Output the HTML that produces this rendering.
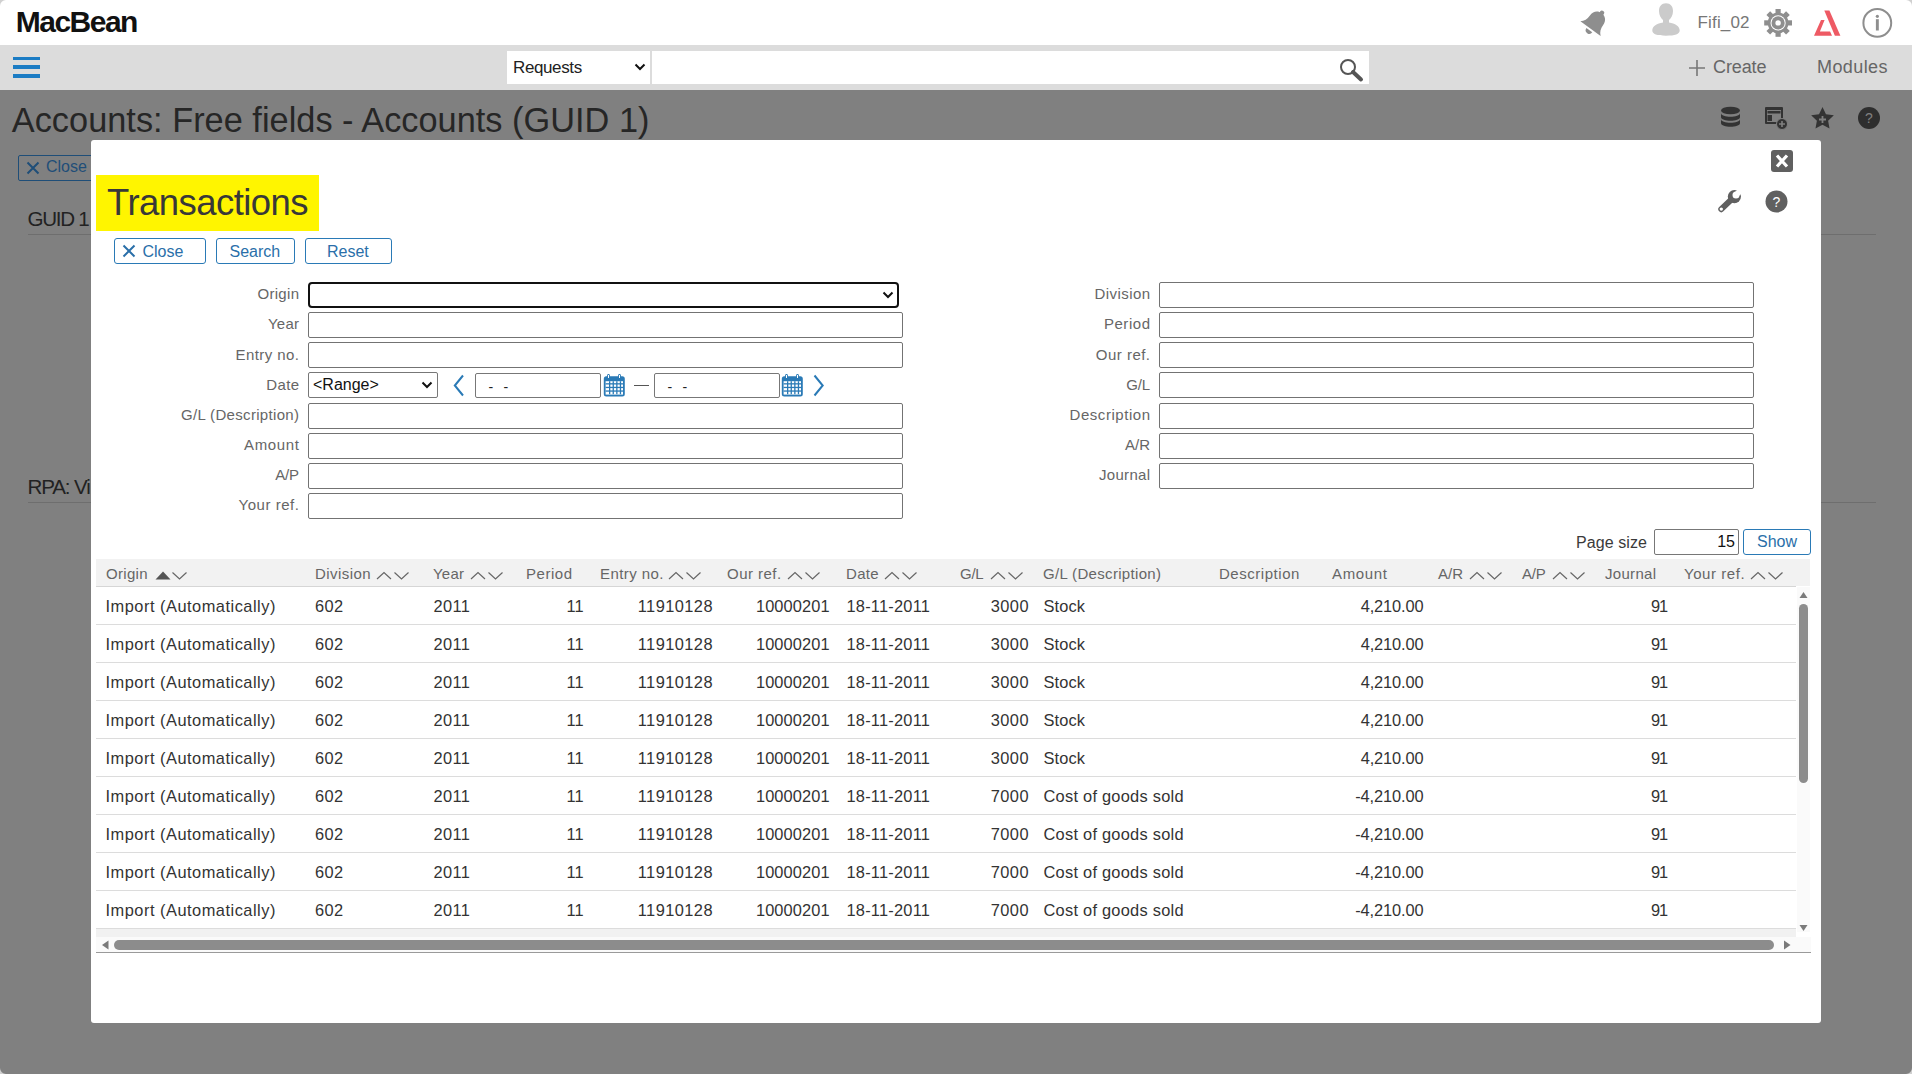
<!DOCTYPE html>
<html><head><meta charset="utf-8"><title>Transactions</title>
<style>
html,body{margin:0;padding:0}
body{width:1912px;height:1074px;overflow:hidden;position:relative;background:#808080;font-family:"Liberation Sans",sans-serif}
.t{position:absolute;white-space:nowrap}
.r{position:absolute;display:block}
</style></head><body>
<div class="r" style="left:0px;top:0px;width:1912px;height:45px;background:#fff"></div>
<div class="t" style="left:15.8px;top:7.31px;font-size:30px;line-height:30px;color:#111;font-weight:700;letter-spacing:-1.5170000000000001px;font-family:'Liberation Sans',sans-serif;">MacBean</div>
<svg class="r" style="left:1570px;top:0px" width="45" height="45" viewBox="0 0 45 45"><g transform="translate(20.5 28.6) rotate(36)" fill="#8e8e8e"><path d="M-12.5 0 L12.5 0 C9.5 -2.5 8.2 -6 8.2 -10 C8.2 -16 4.5 -19 0 -19 C-4.5 -19 -8.2 -16 -8.2 -10 C-8.2 -6 -9.5 -2.5 -12.5 0Z"/><circle cx="0" cy="-19.5" r="2.3"/><path d="M-3.6 2 A3.6 3.6 0 0 0 3.6 2Z"/></g></svg>
<svg class="r" style="left:1650px;top:0px" width="32" height="40" viewBox="0 0 32 40"><g fill="#cbcbcb"><path d="M16 3.3 C11.5 3.3 9 6.5 9 11 C9 15 11 18.5 13 20 L13 22.5 C7 23.5 2.3 26 2.3 30.5 C2.3 34 7 35.7 16 35.7 C25 35.7 29.7 34 29.7 30.5 C29.7 26 25 23.5 19 22.5 L19 20 C21 18.5 23 15 23 11 C23 6.5 20.5 3.3 16 3.3Z"/></g></svg>
<div class="t" style="left:1697.5px;top:14.11px;font-size:17px;line-height:17px;color:#777;font-weight:400;letter-spacing:0.167px;font-family:'Liberation Sans',sans-serif;">Fifi_02</div>
<svg class="r" style="left:1758px;top:2px" width="40" height="42" viewBox="0 0 40 42"><g fill="#8e8e8e" transform="translate(20.1 20.9)"><rect x="-2.6" y="-13.9" width="5.2" height="6" transform="rotate(0)"/><rect x="-2.6" y="-13.9" width="5.2" height="6" transform="rotate(45)"/><rect x="-2.6" y="-13.9" width="5.2" height="6" transform="rotate(90)"/><rect x="-2.6" y="-13.9" width="5.2" height="6" transform="rotate(135)"/><rect x="-2.6" y="-13.9" width="5.2" height="6" transform="rotate(180)"/><rect x="-2.6" y="-13.9" width="5.2" height="6" transform="rotate(225)"/><rect x="-2.6" y="-13.9" width="5.2" height="6" transform="rotate(270)"/><rect x="-2.6" y="-13.9" width="5.2" height="6" transform="rotate(315)"/><circle r="10.4"/></g><circle cx="20.1" cy="20.9" r="7.6" fill="#fff"/><circle cx="20.1" cy="20.9" r="6.6" fill="#8e8e8e"/><circle cx="20.1" cy="20.9" r="2.7" fill="#fff"/></svg>
<svg class="r" style="left:1810px;top:8px" width="34" height="30" viewBox="0 0 34 30"><g fill="#ee5a64" transform="translate(-1810 -8)"><path d="M1824.3 10.4 L1829.4 10.4 L1840.4 35.8 L1834.9 35.8Z"/><path d="M1814 35.8 L1821 20 L1824.6 20 L1819.9 31.6 L1830.1 31.6 L1832 35.8Z"/></g></svg>
<svg class="r" style="left:1858px;top:3px" width="40" height="40" viewBox="0 0 40 40"><g transform="translate(-1858 -3)"><circle cx="1877.3" cy="22.9" r="13.9" fill="none" stroke="#8e8e8e" stroke-width="2"/><rect x="1875.9" y="19.2" width="2.9" height="11.3" fill="#8e8e8e"/><circle cx="1877.35" cy="16.3" r="1.6" fill="#8e8e8e"/></g></svg>
<div class="r" style="left:0px;top:45px;width:1912px;height:45px;background:#dcdcdc"></div>
<div class="r" style="left:13px;top:57px;width:27px;height:3px;background:#1b7cc4"></div>
<div class="r" style="left:13px;top:65px;width:27px;height:4px;background:#1b7cc4"></div>
<div class="r" style="left:13px;top:74px;width:27px;height:4px;background:#1b7cc4"></div>
<div class="r" style="left:507px;top:51px;width:143px;height:33px;background:#fff"></div>
<div class="t" style="left:513px;top:58.61px;font-size:17px;line-height:17px;color:#222;font-weight:400;letter-spacing:-0.38px;font-family:'Liberation Sans',sans-serif;">Requests</div>
<svg class="r" style="left:633px;top:61px" width="14" height="12" viewBox="0 0 14 12"><path d="M2.5 3.5 L7 8 L11.5 3.5" fill="none" stroke="#111" stroke-width="2"/></svg>
<div class="r" style="left:652px;top:51px;width:717px;height:33px;background:#fff"></div>
<svg class="r" style="left:1337px;top:56px" width="28" height="28" viewBox="0 0 28 28"><circle cx="11" cy="11" r="7" fill="none" stroke="#555" stroke-width="2"/><path d="M16 16 L24 23.5" stroke="#555" stroke-width="4" stroke-linecap="round"/><path d="M15 15 L17 17" stroke="#555" stroke-width="2"/></svg>
<svg class="r" style="left:1688px;top:59px" width="18" height="18" viewBox="0 0 18 18"><path d="M9 1 V17 M1 9 H17" stroke="#777" stroke-width="1.6"/></svg>
<div class="t" style="left:1713px;top:57.76px;font-size:18px;line-height:18px;color:#666;font-weight:400;letter-spacing:-0.1px;font-family:'Liberation Sans',sans-serif;">Create</div>
<div class="t" style="left:1817px;top:57.76px;font-size:18px;line-height:18px;color:#666;font-weight:400;letter-spacing:0.417px;font-family:'Liberation Sans',sans-serif;">Modules</div>
<div class="r" style="left:0px;top:90px;width:1912px;height:984px;background:#808080"></div>
<div class="t" style="left:11.8px;top:102.97px;font-size:34.3px;line-height:34.3px;color:#262626;font-weight:400;letter-spacing:0.025px;font-family:'Liberation Sans',sans-serif;">Accounts: Free fields - Accounts (GUID 1)</div>
<svg class="r" style="left:1720px;top:106px" width="22" height="24" viewBox="0 0 22 24"><g fill="#333"><ellipse cx="10.5" cy="4.5" rx="9.5" ry="3.8"/><path d="M1 7 C1 12 20 12 20 7 V11 C20 16 1 16 1 11Z"/><path d="M1 13 C1 18 20 18 20 13 V17 C20 22 1 22 1 17Z"/></g></svg>
<svg class="r" style="left:1764px;top:106px" width="26" height="25" viewBox="0 0 26 25"><g fill="#333"><rect x="1" y="1" width="18" height="17" rx="1"/></g><rect x="3" y="4" width="14" height="12" fill="#808080"/><rect x="3.5" y="5" width="13" height="2.5" fill="#333"/><rect x="3.5" y="9" width="4.5" height="6" fill="#333"/><circle cx="18" cy="18" r="5.5" fill="#333" stroke="#808080" stroke-width="1"/><path d="M18 15 V21 M15 18 H21" stroke="#808080" stroke-width="1.6"/></svg>
<svg class="r" style="left:1811px;top:106px" width="24" height="24" viewBox="0 0 24 24"><path d="M11.50 1.00 L14.97 8.17 L22.86 9.25 L17.11 14.76 L18.52 22.60 L11.50 18.84 L4.48 22.60 L5.89 14.76 L0.14 9.25 L8.03 8.17Z" fill="#333"/><path d="M11.5 10 V17 M8 13.5 H15" stroke="#808080" stroke-width="1.8"/></svg>
<svg class="r" style="left:1857px;top:106px" width="24" height="24" viewBox="0 0 24 24"><circle cx="12" cy="12" r="11" fill="#2e2e2e"/><text x="12" y="17" text-anchor="middle" font-family="Liberation Sans" font-size="14" fill="#808080">?</text></svg>
<div class="r" style="left:18px;top:155px;width:100px;height:26px;border:1px solid #1f4e78;border-radius:2px;box-sizing:border-box"></div>
<svg class="r" style="left:26px;top:161px" width="14" height="14" viewBox="0 0 14 14"><path d="M1.5 1.5 L12.5 12.5 M12.5 1.5 L1.5 12.5" stroke="#1f4e78" stroke-width="2"/></svg>
<div class="t" style="left:46px;top:159.46px;font-size:16px;line-height:16px;color:#1f4e78;font-weight:400;font-family:'Liberation Sans',sans-serif;">Close</div>
<div class="t" style="left:27.5px;top:209.46px;font-size:20.6px;line-height:20.6px;color:#222;font-weight:400;letter-spacing:-1.3px;font-family:'Liberation Sans',sans-serif;">GUID 1</div>
<div class="r" style="left:28px;top:234px;width:1848px;height:1px;background:#6e6e6e"></div>
<div class="t" style="left:27.5px;top:476.56px;font-size:20.6px;line-height:20.6px;color:#222;font-weight:400;letter-spacing:-1.15px;font-family:'Liberation Sans',sans-serif;">RPA: Vi</div>
<div class="r" style="left:28px;top:502px;width:1848px;height:1px;background:#6e6e6e"></div>
<div class="r" style="left:91px;top:140px;width:1730px;height:883px;background:#fff;border-radius:3px"></div>
<div class="r" style="left:1771px;top:150px;width:22px;height:22px;background:#606060;border-radius:3px"></div>
<svg class="r" style="left:1771px;top:150px" width="22" height="22" viewBox="0 0 22 22"><path d="M6 5.5 L16 16.5 M16 5.5 L6 16.5" stroke="#fff" stroke-width="3.2"/></svg>
<svg class="r" style="left:1716px;top:187px" width="28" height="28" viewBox="0 0 28 28"><circle cx="18.4" cy="9.6" r="6.6" fill="#606060"/><path d="M18.4 9.6 L5.3 22.2" stroke="#606060" stroke-width="6" stroke-linecap="round"/><circle cx="20" cy="8" r="3.5" fill="#fff"/><path d="M20 8 L27 1" stroke="#fff" stroke-width="5.5"/><circle cx="5.3" cy="22.1" r="1.7" fill="#fff"/></svg>
<svg class="r" style="left:1765px;top:190px" width="23" height="23" viewBox="0 0 23 23"><circle cx="11.5" cy="11.5" r="11" fill="#606060"/><text x="11.5" y="16.6" text-anchor="middle" font-family="Liberation Sans" font-size="14" fill="#fff">?</text></svg>
<div class="r" style="left:96px;top:175px;width:223px;height:56px;background:#fff500"></div>
<div class="t" style="left:107px;top:185.30px;font-size:36.5px;line-height:36.5px;color:#383838;font-weight:400;letter-spacing:-0.55px;font-family:'Liberation Sans',sans-serif;">Transactions</div>
<div class="r" style="left:114px;top:238px;width:92px;height:26px;border:1px solid #2a7ab6;border-radius:3px;box-sizing:border-box;background:#fff"></div>
<div class="t" style="left:142.5px;top:244.46px;font-size:16px;line-height:16px;color:#2a6fa9;font-weight:400;font-family:'Liberation Sans',sans-serif;">Close</div>
<svg class="r" style="left:122px;top:244px" width="14" height="14" viewBox="0 0 14 14"><path d="M1.5 1.5 L12.5 12.5 M12.5 1.5 L1.5 12.5" stroke="#2a6fa9" stroke-width="2"/></svg>
<div class="r" style="left:216px;top:238px;width:79px;height:26px;border:1px solid #2a7ab6;border-radius:3px;box-sizing:border-box;background:#fff"></div>
<div class="t" style="left:229.5px;top:244.46px;font-size:16px;line-height:16px;color:#2a6fa9;font-weight:400;font-family:'Liberation Sans',sans-serif;">Search</div>
<div class="r" style="left:305px;top:238px;width:87px;height:26px;border:1px solid #2a7ab6;border-radius:3px;box-sizing:border-box;background:#fff"></div>
<div class="t" style="left:327px;top:244.46px;font-size:16px;line-height:16px;color:#2a6fa9;font-weight:400;font-family:'Liberation Sans',sans-serif;">Reset</div>
<div class="t" style="right:1612.68px;text-align:right;top:286.30px;font-size:15px;line-height:15px;color:#666;font-weight:400;letter-spacing:0.32px;font-family:'Liberation Sans',sans-serif;">Origin</div>
<div class="r" style="left:308px;top:282px;width:591px;height:26px;border:2px solid #111;border-radius:4px;box-sizing:border-box;background:#fff"></div>
<svg class="r" style="left:881px;top:289px" width="14" height="12" viewBox="0 0 14 12"><path d="M2.5 3.5 L7 8 L11.5 3.5" fill="none" stroke="#111" stroke-width="2"/></svg>
<div class="t" style="right:1612.77px;text-align:right;top:316.45px;font-size:15px;line-height:15px;color:#666;font-weight:400;letter-spacing:0.233px;font-family:'Liberation Sans',sans-serif;">Year</div>
<div class="r" style="left:308px;top:312px;width:595px;height:26px;border:1px solid #737373;border-radius:2px;box-sizing:border-box;background:#fff"></div>
<div class="t" style="right:1612.58px;text-align:right;top:346.60px;font-size:15px;line-height:15px;color:#666;font-weight:400;letter-spacing:0.425px;font-family:'Liberation Sans',sans-serif;">Entry no.</div>
<div class="r" style="left:308px;top:342px;width:595px;height:26px;border:1px solid #737373;border-radius:2px;box-sizing:border-box;background:#fff"></div>
<div class="t" style="right:1612.67px;text-align:right;top:376.75px;font-size:15px;line-height:15px;color:#666;font-weight:400;letter-spacing:0.333px;font-family:'Liberation Sans',sans-serif;">Date</div>
<div class="r" style="left:308px;top:372px;width:130px;height:26px;border:1px solid #777;border-radius:2px;box-sizing:border-box;background:#fff"></div>
<div class="t" style="left:313px;top:376.96px;font-size:16px;line-height:16px;color:#111;font-weight:400;font-family:'Liberation Sans',sans-serif;">&lt;Range&gt;</div>
<svg class="r" style="left:420px;top:379px" width="14" height="12" viewBox="0 0 14 12"><path d="M2.5 3.5 L7 8 L11.5 3.5" fill="none" stroke="#111" stroke-width="2"/></svg>
<svg class="r" style="left:451px;top:374px" width="16" height="23" viewBox="0 0 16 23"><path d="M12 1.5 L3.8 11.5 L12 21.5" fill="none" stroke="#2a7ab6" stroke-width="2"/></svg>
<div class="r" style="left:475px;top:373px;width:126px;height:25px;border:1px solid #777;border-radius:2px;box-sizing:border-box;background:#fff"></div>
<div class="t" style="left:488.5px;top:380.15px;font-size:14px;line-height:14px;color:#222;font-weight:400;font-family:'Liberation Sans',sans-serif;">-</div>
<div class="t" style="left:503.5px;top:380.15px;font-size:14px;line-height:14px;color:#222;font-weight:400;font-family:'Liberation Sans',sans-serif;">-</div>
<div class="r" style="left:654px;top:373px;width:126px;height:25px;border:1px solid #777;border-radius:2px;box-sizing:border-box;background:#fff"></div>
<div class="t" style="left:667.5px;top:380.15px;font-size:14px;line-height:14px;color:#222;font-weight:400;font-family:'Liberation Sans',sans-serif;">-</div>
<div class="t" style="left:682.5px;top:380.15px;font-size:14px;line-height:14px;color:#222;font-weight:400;font-family:'Liberation Sans',sans-serif;">-</div>
<div class="r" style="left:634px;top:385px;width:15px;height:1.2px;background:#555"></div>
<svg class="r" style="left:602.5px;top:374px" width="23" height="23" viewBox="0 0 23 23"><rect x="0.8" y="2.2" width="21" height="20.2" rx="2.5" fill="#2a7ab6"/><rect x="2.6" y="7.2" width="17.4" height="13.4" fill="#fff"/><rect x="4.2" y="0" width="2.6" height="5" rx="1.2" fill="#2a7ab6"/><rect x="15.2" y="0" width="2.6" height="5" rx="1.2" fill="#2a7ab6"/><rect x="5" y="1" width="1" height="3" fill="#fff"/><rect x="16" y="1" width="1" height="3" fill="#fff"/><g fill="#2a7ab6"><rect x="2.6" y="9.2" width="17.4" height="1.3"/><rect x="2.6" y="12.8" width="17.4" height="1.3"/><rect x="2.6" y="16.4" width="17.4" height="1.3"/><rect x="6" y="7.2" width="1.3" height="13"/><rect x="9.6" y="7.2" width="1.3" height="13"/><rect x="13.2" y="7.2" width="1.3" height="13"/><rect x="16.8" y="7.2" width="1.3" height="13"/></g></svg>
<svg class="r" style="left:781px;top:374px" width="23" height="23" viewBox="0 0 23 23"><rect x="0.8" y="2.2" width="21" height="20.2" rx="2.5" fill="#2a7ab6"/><rect x="2.6" y="7.2" width="17.4" height="13.4" fill="#fff"/><rect x="4.2" y="0" width="2.6" height="5" rx="1.2" fill="#2a7ab6"/><rect x="15.2" y="0" width="2.6" height="5" rx="1.2" fill="#2a7ab6"/><rect x="5" y="1" width="1" height="3" fill="#fff"/><rect x="16" y="1" width="1" height="3" fill="#fff"/><g fill="#2a7ab6"><rect x="2.6" y="9.2" width="17.4" height="1.3"/><rect x="2.6" y="12.8" width="17.4" height="1.3"/><rect x="2.6" y="16.4" width="17.4" height="1.3"/><rect x="6" y="7.2" width="1.3" height="13"/><rect x="9.6" y="7.2" width="1.3" height="13"/><rect x="13.2" y="7.2" width="1.3" height="13"/><rect x="16.8" y="7.2" width="1.3" height="13"/></g></svg>
<svg class="r" style="left:810px;top:374px" width="16" height="23" viewBox="0 0 16 23"><path d="M4.5 1.5 L12.7 11.5 L4.5 21.5" fill="none" stroke="#2a7ab6" stroke-width="2"/></svg>
<div class="t" style="right:1612.67px;text-align:right;top:406.90px;font-size:15px;line-height:15px;color:#666;font-weight:400;letter-spacing:0.325px;font-family:'Liberation Sans',sans-serif;">G/L (Description)</div>
<div class="r" style="left:308px;top:403px;width:595px;height:26px;border:1px solid #737373;border-radius:2px;box-sizing:border-box;background:#fff"></div>
<div class="t" style="right:1612.34px;text-align:right;top:437.05px;font-size:15px;line-height:15px;color:#666;font-weight:400;letter-spacing:0.66px;font-family:'Liberation Sans',sans-serif;">Amount</div>
<div class="r" style="left:308px;top:433px;width:595px;height:26px;border:1px solid #737373;border-radius:2px;box-sizing:border-box;background:#fff"></div>
<div class="t" style="right:1613.25px;text-align:right;top:467.20px;font-size:15px;line-height:15px;color:#666;font-weight:400;letter-spacing:-0.25px;font-family:'Liberation Sans',sans-serif;">A/P</div>
<div class="r" style="left:308px;top:463px;width:595px;height:26px;border:1px solid #737373;border-radius:2px;box-sizing:border-box;background:#fff"></div>
<div class="t" style="right:1612.45px;text-align:right;top:497.35px;font-size:15px;line-height:15px;color:#666;font-weight:400;letter-spacing:0.55px;font-family:'Liberation Sans',sans-serif;">Your ref.</div>
<div class="r" style="left:308px;top:493px;width:595px;height:26px;border:1px solid #737373;border-radius:2px;box-sizing:border-box;background:#fff"></div>
<div class="t" style="right:761.57px;text-align:right;top:286.30px;font-size:15px;line-height:15px;color:#666;font-weight:400;letter-spacing:0.429px;font-family:'Liberation Sans',sans-serif;">Division</div>
<div class="r" style="left:1159px;top:282px;width:595px;height:26px;border:1px solid #737373;border-radius:2px;box-sizing:border-box;background:#fff"></div>
<div class="t" style="right:761.46px;text-align:right;top:316.45px;font-size:15px;line-height:15px;color:#666;font-weight:400;letter-spacing:0.54px;font-family:'Liberation Sans',sans-serif;">Period</div>
<div class="r" style="left:1159px;top:312px;width:595px;height:26px;border:1px solid #737373;border-radius:2px;box-sizing:border-box;background:#fff"></div>
<div class="t" style="right:761.53px;text-align:right;top:346.60px;font-size:15px;line-height:15px;color:#666;font-weight:400;letter-spacing:0.471px;font-family:'Liberation Sans',sans-serif;">Our ref.</div>
<div class="r" style="left:1159px;top:342px;width:595px;height:26px;border:1px solid #737373;border-radius:2px;box-sizing:border-box;background:#fff"></div>
<div class="t" style="right:762.25px;text-align:right;top:376.75px;font-size:15px;line-height:15px;color:#666;font-weight:400;letter-spacing:-0.25px;font-family:'Liberation Sans',sans-serif;">G/L</div>
<div class="r" style="left:1159px;top:372px;width:595px;height:26px;border:1px solid #737373;border-radius:2px;box-sizing:border-box;background:#fff"></div>
<div class="t" style="right:761.46px;text-align:right;top:406.90px;font-size:15px;line-height:15px;color:#666;font-weight:400;letter-spacing:0.54px;font-family:'Liberation Sans',sans-serif;">Description</div>
<div class="r" style="left:1159px;top:403px;width:595px;height:26px;border:1px solid #737373;border-radius:2px;box-sizing:border-box;background:#fff"></div>
<div class="t" style="right:761.95px;text-align:right;top:437.05px;font-size:15px;line-height:15px;color:#666;font-weight:400;letter-spacing:0.05px;font-family:'Liberation Sans',sans-serif;">A/R</div>
<div class="r" style="left:1159px;top:433px;width:595px;height:26px;border:1px solid #737373;border-radius:2px;box-sizing:border-box;background:#fff"></div>
<div class="t" style="right:761.70px;text-align:right;top:467.20px;font-size:15px;line-height:15px;color:#666;font-weight:400;letter-spacing:0.3px;font-family:'Liberation Sans',sans-serif;">Journal</div>
<div class="r" style="left:1159px;top:463px;width:595px;height:26px;border:1px solid #737373;border-radius:2px;box-sizing:border-box;background:#fff"></div>
<div class="t" style="right:264.90px;text-align:right;top:535.46px;font-size:16px;line-height:16px;color:#3a3a3a;font-weight:400;letter-spacing:0.1px;font-family:'Liberation Sans',sans-serif;">Page size</div>
<div class="r" style="left:1654px;top:529px;width:85px;height:26px;border:1px solid #777;border-radius:2px;box-sizing:border-box;background:#fff"></div>
<div class="t" style="right:177.00px;text-align:right;top:534.46px;font-size:16px;line-height:16px;color:#111;font-weight:400;font-family:'Liberation Sans',sans-serif;">15</div>
<div class="r" style="left:1743px;top:529px;width:68px;height:26px;border:1px solid #2a7ab6;border-radius:3px;box-sizing:border-box;background:#fff"></div>
<div class="t" style="left:1757px;top:534.46px;font-size:16px;line-height:16px;color:#2a6fa9;font-weight:400;font-family:'Liberation Sans',sans-serif;">Show</div>
<div class="r" style="left:96px;top:559px;width:1714px;height:27px;background:#f2f2f2"></div>
<div class="r" style="left:96px;top:586px;width:1700px;height:1px;background:#d6d6d6"></div>
<div class="t" style="left:106px;top:566.30px;font-size:15px;line-height:15px;color:#666;font-weight:400;letter-spacing:0.32px;font-family:'Liberation Sans',sans-serif;">Origin</div>
<svg class="r" style="left:154.9px;top:570px" width="34" height="11" viewBox="0 0 34 11"><path d="M0.5 9.5 L8 1.5 L15.5 9.5Z" fill="#555"/><path d="M17.5 2.5 L24.5 9 L31.5 2.5" fill="none" stroke="#666" stroke-width="1.2"/></svg>
<div class="t" style="left:315px;top:566.30px;font-size:15px;line-height:15px;color:#666;font-weight:400;letter-spacing:0.429px;font-family:'Liberation Sans',sans-serif;">Division</div>
<svg class="r" style="left:375.5px;top:570px" width="34" height="11" viewBox="0 0 34 11"><path d="M1 9 L8 2.5 L15 9" fill="none" stroke="#666" stroke-width="1.2"/><path d="M18.5 2.5 L25.5 9 L32.5 2.5" fill="none" stroke="#666" stroke-width="1.2"/></svg>
<div class="t" style="left:433px;top:566.30px;font-size:15px;line-height:15px;color:#666;font-weight:400;letter-spacing:0.233px;font-family:'Liberation Sans',sans-serif;">Year</div>
<svg class="r" style="left:470.2px;top:570px" width="34" height="11" viewBox="0 0 34 11"><path d="M1 9 L8 2.5 L15 9" fill="none" stroke="#666" stroke-width="1.2"/><path d="M18.5 2.5 L25.5 9 L32.5 2.5" fill="none" stroke="#666" stroke-width="1.2"/></svg>
<div class="t" style="left:526px;top:566.30px;font-size:15px;line-height:15px;color:#666;font-weight:400;letter-spacing:0.54px;font-family:'Liberation Sans',sans-serif;">Period</div>
<div class="t" style="left:600px;top:566.30px;font-size:15px;line-height:15px;color:#666;font-weight:400;letter-spacing:0.425px;font-family:'Liberation Sans',sans-serif;">Entry no.</div>
<svg class="r" style="left:667.9px;top:570px" width="34" height="11" viewBox="0 0 34 11"><path d="M1 9 L8 2.5 L15 9" fill="none" stroke="#666" stroke-width="1.2"/><path d="M18.5 2.5 L25.5 9 L32.5 2.5" fill="none" stroke="#666" stroke-width="1.2"/></svg>
<div class="t" style="left:727px;top:566.30px;font-size:15px;line-height:15px;color:#666;font-weight:400;letter-spacing:0.471px;font-family:'Liberation Sans',sans-serif;">Our ref.</div>
<svg class="r" style="left:786.8px;top:570px" width="34" height="11" viewBox="0 0 34 11"><path d="M1 9 L8 2.5 L15 9" fill="none" stroke="#666" stroke-width="1.2"/><path d="M18.5 2.5 L25.5 9 L32.5 2.5" fill="none" stroke="#666" stroke-width="1.2"/></svg>
<div class="t" style="left:846px;top:566.30px;font-size:15px;line-height:15px;color:#666;font-weight:400;letter-spacing:0.333px;font-family:'Liberation Sans',sans-serif;">Date</div>
<svg class="r" style="left:883.5px;top:570px" width="34" height="11" viewBox="0 0 34 11"><path d="M1 9 L8 2.5 L15 9" fill="none" stroke="#666" stroke-width="1.2"/><path d="M18.5 2.5 L25.5 9 L32.5 2.5" fill="none" stroke="#666" stroke-width="1.2"/></svg>
<div class="t" style="left:960px;top:566.30px;font-size:15px;line-height:15px;color:#666;font-weight:400;letter-spacing:-0.25px;font-family:'Liberation Sans',sans-serif;">G/L</div>
<svg class="r" style="left:990.0px;top:570px" width="34" height="11" viewBox="0 0 34 11"><path d="M1 9 L8 2.5 L15 9" fill="none" stroke="#666" stroke-width="1.2"/><path d="M18.5 2.5 L25.5 9 L32.5 2.5" fill="none" stroke="#666" stroke-width="1.2"/></svg>
<div class="t" style="left:1043px;top:566.30px;font-size:15px;line-height:15px;color:#666;font-weight:400;letter-spacing:0.325px;font-family:'Liberation Sans',sans-serif;">G/L (Description)</div>
<div class="t" style="left:1219px;top:566.30px;font-size:15px;line-height:15px;color:#666;font-weight:400;letter-spacing:0.54px;font-family:'Liberation Sans',sans-serif;">Description</div>
<div class="t" style="left:1332px;top:566.30px;font-size:15px;line-height:15px;color:#666;font-weight:400;letter-spacing:0.66px;font-family:'Liberation Sans',sans-serif;">Amount</div>
<div class="t" style="left:1438px;top:566.30px;font-size:15px;line-height:15px;color:#666;font-weight:400;letter-spacing:0.05px;font-family:'Liberation Sans',sans-serif;">A/R</div>
<svg class="r" style="left:1468.6px;top:570px" width="34" height="11" viewBox="0 0 34 11"><path d="M1 9 L8 2.5 L15 9" fill="none" stroke="#666" stroke-width="1.2"/><path d="M18.5 2.5 L25.5 9 L32.5 2.5" fill="none" stroke="#666" stroke-width="1.2"/></svg>
<div class="t" style="left:1522px;top:566.30px;font-size:15px;line-height:15px;color:#666;font-weight:400;letter-spacing:-0.25px;font-family:'Liberation Sans',sans-serif;">A/P</div>
<svg class="r" style="left:1552.0px;top:570px" width="34" height="11" viewBox="0 0 34 11"><path d="M1 9 L8 2.5 L15 9" fill="none" stroke="#666" stroke-width="1.2"/><path d="M18.5 2.5 L25.5 9 L32.5 2.5" fill="none" stroke="#666" stroke-width="1.2"/></svg>
<div class="t" style="left:1605px;top:566.30px;font-size:15px;line-height:15px;color:#666;font-weight:400;letter-spacing:0.3px;font-family:'Liberation Sans',sans-serif;">Journal</div>
<div class="t" style="left:1684px;top:566.30px;font-size:15px;line-height:15px;color:#666;font-weight:400;letter-spacing:0.55px;font-family:'Liberation Sans',sans-serif;">Your ref.</div>
<svg class="r" style="left:1749.9px;top:570px" width="34" height="11" viewBox="0 0 34 11"><path d="M1 9 L8 2.5 L15 9" fill="none" stroke="#666" stroke-width="1.2"/><path d="M18.5 2.5 L25.5 9 L32.5 2.5" fill="none" stroke="#666" stroke-width="1.2"/></svg>
<div class="r" style="left:96px;top:624px;width:1700px;height:1px;background:#dcdcdc"></div>
<div class="t" style="left:105.5px;top:598.42px;font-size:16.4px;line-height:16.4px;color:#333;font-weight:400;letter-spacing:0.5px;font-family:'Liberation Sans',sans-serif;">Import (Automatically)</div>
<div class="t" style="left:315px;top:598.42px;font-size:16.4px;line-height:16.4px;color:#333;font-weight:400;letter-spacing:0.35px;font-family:'Liberation Sans',sans-serif;">602</div>
<div class="t" style="left:433.5px;top:598.42px;font-size:16.4px;line-height:16.4px;color:#333;font-weight:400;letter-spacing:0.333px;font-family:'Liberation Sans',sans-serif;">2011</div>
<div class="t" style="right:1328.50px;text-align:right;top:598.42px;font-size:16.4px;line-height:16.4px;color:#333;font-weight:400;font-family:'Liberation Sans',sans-serif;">11</div>
<div class="t" style="right:1199.07px;text-align:right;top:598.42px;font-size:16.4px;line-height:16.4px;color:#333;font-weight:400;letter-spacing:0.429px;font-family:'Liberation Sans',sans-serif;">11910128</div>
<div class="t" style="right:1082.41px;text-align:right;top:598.42px;font-size:16.4px;line-height:16.4px;color:#333;font-weight:400;letter-spacing:0.086px;font-family:'Liberation Sans',sans-serif;">10000201</div>
<div class="t" style="left:846.5px;top:598.42px;font-size:16.4px;line-height:16.4px;color:#333;font-weight:400;letter-spacing:0.222px;font-family:'Liberation Sans',sans-serif;">18-11-2011</div>
<div class="t" style="right:883.10px;text-align:right;top:598.42px;font-size:16.4px;line-height:16.4px;color:#333;font-weight:400;letter-spacing:0.4px;font-family:'Liberation Sans',sans-serif;">3000</div>
<div class="t" style="left:1043.5px;top:598.42px;font-size:16.4px;line-height:16.4px;color:#333;font-weight:400;letter-spacing:0.1px;font-family:'Liberation Sans',sans-serif;">Stock</div>
<div class="t" style="right:488.64px;text-align:right;top:598.42px;font-size:16.4px;line-height:16.4px;color:#333;font-weight:400;letter-spacing:-0.143px;font-family:'Liberation Sans',sans-serif;">4,210.00</div>
<div class="t" style="right:245.20px;text-align:right;top:598.42px;font-size:16.4px;line-height:16.4px;color:#333;font-weight:400;letter-spacing:-1.2px;font-family:'Liberation Sans',sans-serif;">91</div>
<div class="r" style="left:96px;top:662px;width:1700px;height:1px;background:#dcdcdc"></div>
<div class="t" style="left:105.5px;top:636.42px;font-size:16.4px;line-height:16.4px;color:#333;font-weight:400;letter-spacing:0.5px;font-family:'Liberation Sans',sans-serif;">Import (Automatically)</div>
<div class="t" style="left:315px;top:636.42px;font-size:16.4px;line-height:16.4px;color:#333;font-weight:400;letter-spacing:0.35px;font-family:'Liberation Sans',sans-serif;">602</div>
<div class="t" style="left:433.5px;top:636.42px;font-size:16.4px;line-height:16.4px;color:#333;font-weight:400;letter-spacing:0.333px;font-family:'Liberation Sans',sans-serif;">2011</div>
<div class="t" style="right:1328.50px;text-align:right;top:636.42px;font-size:16.4px;line-height:16.4px;color:#333;font-weight:400;font-family:'Liberation Sans',sans-serif;">11</div>
<div class="t" style="right:1199.07px;text-align:right;top:636.42px;font-size:16.4px;line-height:16.4px;color:#333;font-weight:400;letter-spacing:0.429px;font-family:'Liberation Sans',sans-serif;">11910128</div>
<div class="t" style="right:1082.41px;text-align:right;top:636.42px;font-size:16.4px;line-height:16.4px;color:#333;font-weight:400;letter-spacing:0.086px;font-family:'Liberation Sans',sans-serif;">10000201</div>
<div class="t" style="left:846.5px;top:636.42px;font-size:16.4px;line-height:16.4px;color:#333;font-weight:400;letter-spacing:0.222px;font-family:'Liberation Sans',sans-serif;">18-11-2011</div>
<div class="t" style="right:883.10px;text-align:right;top:636.42px;font-size:16.4px;line-height:16.4px;color:#333;font-weight:400;letter-spacing:0.4px;font-family:'Liberation Sans',sans-serif;">3000</div>
<div class="t" style="left:1043.5px;top:636.42px;font-size:16.4px;line-height:16.4px;color:#333;font-weight:400;letter-spacing:0.1px;font-family:'Liberation Sans',sans-serif;">Stock</div>
<div class="t" style="right:488.64px;text-align:right;top:636.42px;font-size:16.4px;line-height:16.4px;color:#333;font-weight:400;letter-spacing:-0.143px;font-family:'Liberation Sans',sans-serif;">4,210.00</div>
<div class="t" style="right:245.20px;text-align:right;top:636.42px;font-size:16.4px;line-height:16.4px;color:#333;font-weight:400;letter-spacing:-1.2px;font-family:'Liberation Sans',sans-serif;">91</div>
<div class="r" style="left:96px;top:700px;width:1700px;height:1px;background:#dcdcdc"></div>
<div class="t" style="left:105.5px;top:674.42px;font-size:16.4px;line-height:16.4px;color:#333;font-weight:400;letter-spacing:0.5px;font-family:'Liberation Sans',sans-serif;">Import (Automatically)</div>
<div class="t" style="left:315px;top:674.42px;font-size:16.4px;line-height:16.4px;color:#333;font-weight:400;letter-spacing:0.35px;font-family:'Liberation Sans',sans-serif;">602</div>
<div class="t" style="left:433.5px;top:674.42px;font-size:16.4px;line-height:16.4px;color:#333;font-weight:400;letter-spacing:0.333px;font-family:'Liberation Sans',sans-serif;">2011</div>
<div class="t" style="right:1328.50px;text-align:right;top:674.42px;font-size:16.4px;line-height:16.4px;color:#333;font-weight:400;font-family:'Liberation Sans',sans-serif;">11</div>
<div class="t" style="right:1199.07px;text-align:right;top:674.42px;font-size:16.4px;line-height:16.4px;color:#333;font-weight:400;letter-spacing:0.429px;font-family:'Liberation Sans',sans-serif;">11910128</div>
<div class="t" style="right:1082.41px;text-align:right;top:674.42px;font-size:16.4px;line-height:16.4px;color:#333;font-weight:400;letter-spacing:0.086px;font-family:'Liberation Sans',sans-serif;">10000201</div>
<div class="t" style="left:846.5px;top:674.42px;font-size:16.4px;line-height:16.4px;color:#333;font-weight:400;letter-spacing:0.222px;font-family:'Liberation Sans',sans-serif;">18-11-2011</div>
<div class="t" style="right:883.10px;text-align:right;top:674.42px;font-size:16.4px;line-height:16.4px;color:#333;font-weight:400;letter-spacing:0.4px;font-family:'Liberation Sans',sans-serif;">3000</div>
<div class="t" style="left:1043.5px;top:674.42px;font-size:16.4px;line-height:16.4px;color:#333;font-weight:400;letter-spacing:0.1px;font-family:'Liberation Sans',sans-serif;">Stock</div>
<div class="t" style="right:488.64px;text-align:right;top:674.42px;font-size:16.4px;line-height:16.4px;color:#333;font-weight:400;letter-spacing:-0.143px;font-family:'Liberation Sans',sans-serif;">4,210.00</div>
<div class="t" style="right:245.20px;text-align:right;top:674.42px;font-size:16.4px;line-height:16.4px;color:#333;font-weight:400;letter-spacing:-1.2px;font-family:'Liberation Sans',sans-serif;">91</div>
<div class="r" style="left:96px;top:738px;width:1700px;height:1px;background:#dcdcdc"></div>
<div class="t" style="left:105.5px;top:712.42px;font-size:16.4px;line-height:16.4px;color:#333;font-weight:400;letter-spacing:0.5px;font-family:'Liberation Sans',sans-serif;">Import (Automatically)</div>
<div class="t" style="left:315px;top:712.42px;font-size:16.4px;line-height:16.4px;color:#333;font-weight:400;letter-spacing:0.35px;font-family:'Liberation Sans',sans-serif;">602</div>
<div class="t" style="left:433.5px;top:712.42px;font-size:16.4px;line-height:16.4px;color:#333;font-weight:400;letter-spacing:0.333px;font-family:'Liberation Sans',sans-serif;">2011</div>
<div class="t" style="right:1328.50px;text-align:right;top:712.42px;font-size:16.4px;line-height:16.4px;color:#333;font-weight:400;font-family:'Liberation Sans',sans-serif;">11</div>
<div class="t" style="right:1199.07px;text-align:right;top:712.42px;font-size:16.4px;line-height:16.4px;color:#333;font-weight:400;letter-spacing:0.429px;font-family:'Liberation Sans',sans-serif;">11910128</div>
<div class="t" style="right:1082.41px;text-align:right;top:712.42px;font-size:16.4px;line-height:16.4px;color:#333;font-weight:400;letter-spacing:0.086px;font-family:'Liberation Sans',sans-serif;">10000201</div>
<div class="t" style="left:846.5px;top:712.42px;font-size:16.4px;line-height:16.4px;color:#333;font-weight:400;letter-spacing:0.222px;font-family:'Liberation Sans',sans-serif;">18-11-2011</div>
<div class="t" style="right:883.10px;text-align:right;top:712.42px;font-size:16.4px;line-height:16.4px;color:#333;font-weight:400;letter-spacing:0.4px;font-family:'Liberation Sans',sans-serif;">3000</div>
<div class="t" style="left:1043.5px;top:712.42px;font-size:16.4px;line-height:16.4px;color:#333;font-weight:400;letter-spacing:0.1px;font-family:'Liberation Sans',sans-serif;">Stock</div>
<div class="t" style="right:488.64px;text-align:right;top:712.42px;font-size:16.4px;line-height:16.4px;color:#333;font-weight:400;letter-spacing:-0.143px;font-family:'Liberation Sans',sans-serif;">4,210.00</div>
<div class="t" style="right:245.20px;text-align:right;top:712.42px;font-size:16.4px;line-height:16.4px;color:#333;font-weight:400;letter-spacing:-1.2px;font-family:'Liberation Sans',sans-serif;">91</div>
<div class="r" style="left:96px;top:776px;width:1700px;height:1px;background:#dcdcdc"></div>
<div class="t" style="left:105.5px;top:750.42px;font-size:16.4px;line-height:16.4px;color:#333;font-weight:400;letter-spacing:0.5px;font-family:'Liberation Sans',sans-serif;">Import (Automatically)</div>
<div class="t" style="left:315px;top:750.42px;font-size:16.4px;line-height:16.4px;color:#333;font-weight:400;letter-spacing:0.35px;font-family:'Liberation Sans',sans-serif;">602</div>
<div class="t" style="left:433.5px;top:750.42px;font-size:16.4px;line-height:16.4px;color:#333;font-weight:400;letter-spacing:0.333px;font-family:'Liberation Sans',sans-serif;">2011</div>
<div class="t" style="right:1328.50px;text-align:right;top:750.42px;font-size:16.4px;line-height:16.4px;color:#333;font-weight:400;font-family:'Liberation Sans',sans-serif;">11</div>
<div class="t" style="right:1199.07px;text-align:right;top:750.42px;font-size:16.4px;line-height:16.4px;color:#333;font-weight:400;letter-spacing:0.429px;font-family:'Liberation Sans',sans-serif;">11910128</div>
<div class="t" style="right:1082.41px;text-align:right;top:750.42px;font-size:16.4px;line-height:16.4px;color:#333;font-weight:400;letter-spacing:0.086px;font-family:'Liberation Sans',sans-serif;">10000201</div>
<div class="t" style="left:846.5px;top:750.42px;font-size:16.4px;line-height:16.4px;color:#333;font-weight:400;letter-spacing:0.222px;font-family:'Liberation Sans',sans-serif;">18-11-2011</div>
<div class="t" style="right:883.10px;text-align:right;top:750.42px;font-size:16.4px;line-height:16.4px;color:#333;font-weight:400;letter-spacing:0.4px;font-family:'Liberation Sans',sans-serif;">3000</div>
<div class="t" style="left:1043.5px;top:750.42px;font-size:16.4px;line-height:16.4px;color:#333;font-weight:400;letter-spacing:0.1px;font-family:'Liberation Sans',sans-serif;">Stock</div>
<div class="t" style="right:488.64px;text-align:right;top:750.42px;font-size:16.4px;line-height:16.4px;color:#333;font-weight:400;letter-spacing:-0.143px;font-family:'Liberation Sans',sans-serif;">4,210.00</div>
<div class="t" style="right:245.20px;text-align:right;top:750.42px;font-size:16.4px;line-height:16.4px;color:#333;font-weight:400;letter-spacing:-1.2px;font-family:'Liberation Sans',sans-serif;">91</div>
<div class="r" style="left:96px;top:814px;width:1700px;height:1px;background:#dcdcdc"></div>
<div class="t" style="left:105.5px;top:788.42px;font-size:16.4px;line-height:16.4px;color:#333;font-weight:400;letter-spacing:0.5px;font-family:'Liberation Sans',sans-serif;">Import (Automatically)</div>
<div class="t" style="left:315px;top:788.42px;font-size:16.4px;line-height:16.4px;color:#333;font-weight:400;letter-spacing:0.35px;font-family:'Liberation Sans',sans-serif;">602</div>
<div class="t" style="left:433.5px;top:788.42px;font-size:16.4px;line-height:16.4px;color:#333;font-weight:400;letter-spacing:0.333px;font-family:'Liberation Sans',sans-serif;">2011</div>
<div class="t" style="right:1328.50px;text-align:right;top:788.42px;font-size:16.4px;line-height:16.4px;color:#333;font-weight:400;font-family:'Liberation Sans',sans-serif;">11</div>
<div class="t" style="right:1199.07px;text-align:right;top:788.42px;font-size:16.4px;line-height:16.4px;color:#333;font-weight:400;letter-spacing:0.429px;font-family:'Liberation Sans',sans-serif;">11910128</div>
<div class="t" style="right:1082.41px;text-align:right;top:788.42px;font-size:16.4px;line-height:16.4px;color:#333;font-weight:400;letter-spacing:0.086px;font-family:'Liberation Sans',sans-serif;">10000201</div>
<div class="t" style="left:846.5px;top:788.42px;font-size:16.4px;line-height:16.4px;color:#333;font-weight:400;letter-spacing:0.222px;font-family:'Liberation Sans',sans-serif;">18-11-2011</div>
<div class="t" style="right:883.10px;text-align:right;top:788.42px;font-size:16.4px;line-height:16.4px;color:#333;font-weight:400;letter-spacing:0.4px;font-family:'Liberation Sans',sans-serif;">7000</div>
<div class="t" style="left:1043.5px;top:788.42px;font-size:16.4px;line-height:16.4px;color:#333;font-weight:400;letter-spacing:0.253px;font-family:'Liberation Sans',sans-serif;">Cost of goods sold</div>
<div class="t" style="right:488.62px;text-align:right;top:788.42px;font-size:16.4px;line-height:16.4px;color:#333;font-weight:400;letter-spacing:-0.125px;font-family:'Liberation Sans',sans-serif;">-4,210.00</div>
<div class="t" style="right:245.20px;text-align:right;top:788.42px;font-size:16.4px;line-height:16.4px;color:#333;font-weight:400;letter-spacing:-1.2px;font-family:'Liberation Sans',sans-serif;">91</div>
<div class="r" style="left:96px;top:852px;width:1700px;height:1px;background:#dcdcdc"></div>
<div class="t" style="left:105.5px;top:826.42px;font-size:16.4px;line-height:16.4px;color:#333;font-weight:400;letter-spacing:0.5px;font-family:'Liberation Sans',sans-serif;">Import (Automatically)</div>
<div class="t" style="left:315px;top:826.42px;font-size:16.4px;line-height:16.4px;color:#333;font-weight:400;letter-spacing:0.35px;font-family:'Liberation Sans',sans-serif;">602</div>
<div class="t" style="left:433.5px;top:826.42px;font-size:16.4px;line-height:16.4px;color:#333;font-weight:400;letter-spacing:0.333px;font-family:'Liberation Sans',sans-serif;">2011</div>
<div class="t" style="right:1328.50px;text-align:right;top:826.42px;font-size:16.4px;line-height:16.4px;color:#333;font-weight:400;font-family:'Liberation Sans',sans-serif;">11</div>
<div class="t" style="right:1199.07px;text-align:right;top:826.42px;font-size:16.4px;line-height:16.4px;color:#333;font-weight:400;letter-spacing:0.429px;font-family:'Liberation Sans',sans-serif;">11910128</div>
<div class="t" style="right:1082.41px;text-align:right;top:826.42px;font-size:16.4px;line-height:16.4px;color:#333;font-weight:400;letter-spacing:0.086px;font-family:'Liberation Sans',sans-serif;">10000201</div>
<div class="t" style="left:846.5px;top:826.42px;font-size:16.4px;line-height:16.4px;color:#333;font-weight:400;letter-spacing:0.222px;font-family:'Liberation Sans',sans-serif;">18-11-2011</div>
<div class="t" style="right:883.10px;text-align:right;top:826.42px;font-size:16.4px;line-height:16.4px;color:#333;font-weight:400;letter-spacing:0.4px;font-family:'Liberation Sans',sans-serif;">7000</div>
<div class="t" style="left:1043.5px;top:826.42px;font-size:16.4px;line-height:16.4px;color:#333;font-weight:400;letter-spacing:0.253px;font-family:'Liberation Sans',sans-serif;">Cost of goods sold</div>
<div class="t" style="right:488.62px;text-align:right;top:826.42px;font-size:16.4px;line-height:16.4px;color:#333;font-weight:400;letter-spacing:-0.125px;font-family:'Liberation Sans',sans-serif;">-4,210.00</div>
<div class="t" style="right:245.20px;text-align:right;top:826.42px;font-size:16.4px;line-height:16.4px;color:#333;font-weight:400;letter-spacing:-1.2px;font-family:'Liberation Sans',sans-serif;">91</div>
<div class="r" style="left:96px;top:890px;width:1700px;height:1px;background:#dcdcdc"></div>
<div class="t" style="left:105.5px;top:864.42px;font-size:16.4px;line-height:16.4px;color:#333;font-weight:400;letter-spacing:0.5px;font-family:'Liberation Sans',sans-serif;">Import (Automatically)</div>
<div class="t" style="left:315px;top:864.42px;font-size:16.4px;line-height:16.4px;color:#333;font-weight:400;letter-spacing:0.35px;font-family:'Liberation Sans',sans-serif;">602</div>
<div class="t" style="left:433.5px;top:864.42px;font-size:16.4px;line-height:16.4px;color:#333;font-weight:400;letter-spacing:0.333px;font-family:'Liberation Sans',sans-serif;">2011</div>
<div class="t" style="right:1328.50px;text-align:right;top:864.42px;font-size:16.4px;line-height:16.4px;color:#333;font-weight:400;font-family:'Liberation Sans',sans-serif;">11</div>
<div class="t" style="right:1199.07px;text-align:right;top:864.42px;font-size:16.4px;line-height:16.4px;color:#333;font-weight:400;letter-spacing:0.429px;font-family:'Liberation Sans',sans-serif;">11910128</div>
<div class="t" style="right:1082.41px;text-align:right;top:864.42px;font-size:16.4px;line-height:16.4px;color:#333;font-weight:400;letter-spacing:0.086px;font-family:'Liberation Sans',sans-serif;">10000201</div>
<div class="t" style="left:846.5px;top:864.42px;font-size:16.4px;line-height:16.4px;color:#333;font-weight:400;letter-spacing:0.222px;font-family:'Liberation Sans',sans-serif;">18-11-2011</div>
<div class="t" style="right:883.10px;text-align:right;top:864.42px;font-size:16.4px;line-height:16.4px;color:#333;font-weight:400;letter-spacing:0.4px;font-family:'Liberation Sans',sans-serif;">7000</div>
<div class="t" style="left:1043.5px;top:864.42px;font-size:16.4px;line-height:16.4px;color:#333;font-weight:400;letter-spacing:0.253px;font-family:'Liberation Sans',sans-serif;">Cost of goods sold</div>
<div class="t" style="right:488.62px;text-align:right;top:864.42px;font-size:16.4px;line-height:16.4px;color:#333;font-weight:400;letter-spacing:-0.125px;font-family:'Liberation Sans',sans-serif;">-4,210.00</div>
<div class="t" style="right:245.20px;text-align:right;top:864.42px;font-size:16.4px;line-height:16.4px;color:#333;font-weight:400;letter-spacing:-1.2px;font-family:'Liberation Sans',sans-serif;">91</div>
<div class="r" style="left:96px;top:928px;width:1700px;height:1px;background:#dcdcdc"></div>
<div class="t" style="left:105.5px;top:902.42px;font-size:16.4px;line-height:16.4px;color:#333;font-weight:400;letter-spacing:0.5px;font-family:'Liberation Sans',sans-serif;">Import (Automatically)</div>
<div class="t" style="left:315px;top:902.42px;font-size:16.4px;line-height:16.4px;color:#333;font-weight:400;letter-spacing:0.35px;font-family:'Liberation Sans',sans-serif;">602</div>
<div class="t" style="left:433.5px;top:902.42px;font-size:16.4px;line-height:16.4px;color:#333;font-weight:400;letter-spacing:0.333px;font-family:'Liberation Sans',sans-serif;">2011</div>
<div class="t" style="right:1328.50px;text-align:right;top:902.42px;font-size:16.4px;line-height:16.4px;color:#333;font-weight:400;font-family:'Liberation Sans',sans-serif;">11</div>
<div class="t" style="right:1199.07px;text-align:right;top:902.42px;font-size:16.4px;line-height:16.4px;color:#333;font-weight:400;letter-spacing:0.429px;font-family:'Liberation Sans',sans-serif;">11910128</div>
<div class="t" style="right:1082.41px;text-align:right;top:902.42px;font-size:16.4px;line-height:16.4px;color:#333;font-weight:400;letter-spacing:0.086px;font-family:'Liberation Sans',sans-serif;">10000201</div>
<div class="t" style="left:846.5px;top:902.42px;font-size:16.4px;line-height:16.4px;color:#333;font-weight:400;letter-spacing:0.222px;font-family:'Liberation Sans',sans-serif;">18-11-2011</div>
<div class="t" style="right:883.10px;text-align:right;top:902.42px;font-size:16.4px;line-height:16.4px;color:#333;font-weight:400;letter-spacing:0.4px;font-family:'Liberation Sans',sans-serif;">7000</div>
<div class="t" style="left:1043.5px;top:902.42px;font-size:16.4px;line-height:16.4px;color:#333;font-weight:400;letter-spacing:0.253px;font-family:'Liberation Sans',sans-serif;">Cost of goods sold</div>
<div class="t" style="right:488.62px;text-align:right;top:902.42px;font-size:16.4px;line-height:16.4px;color:#333;font-weight:400;letter-spacing:-0.125px;font-family:'Liberation Sans',sans-serif;">-4,210.00</div>
<div class="t" style="right:245.20px;text-align:right;top:902.42px;font-size:16.4px;line-height:16.4px;color:#333;font-weight:400;letter-spacing:-1.2px;font-family:'Liberation Sans',sans-serif;">91</div>
<div class="r" style="left:96px;top:929px;width:1700px;height:8px;background:#f1f1f1"></div>
<div class="r" style="left:1797px;top:587px;width:13px;height:345px;background:#fafafa"></div>
<svg class="r" style="left:1799px;top:591px" width="9" height="8" viewBox="0 0 9 8"><path d="M0.5 7 L4.5 1 L8.5 7Z" fill="#7a7a7a"/></svg>
<div class="r" style="left:1799px;top:604px;width:9px;height:179px;background:#8c8c8c;border-radius:4.5px"></div>
<svg class="r" style="left:1799px;top:924px" width="9" height="8" viewBox="0 0 9 8"><path d="M0.5 1 L4.5 7 L8.5 1Z" fill="#7a7a7a"/></svg>
<div class="r" style="left:96px;top:937px;width:1715px;height:15px;background:#fafafa"></div>
<svg class="r" style="left:101px;top:940px" width="9" height="10" viewBox="0 0 9 10"><path d="M7.5 0.5 L1 5 L7.5 9.5Z" fill="#7a7a7a"/></svg>
<div class="r" style="left:114px;top:940px;width:1660px;height:9.5px;background:#8c8c8c;border-radius:5px"></div>
<svg class="r" style="left:1783px;top:940px" width="9" height="10" viewBox="0 0 9 10"><path d="M1 0.5 L7.5 5 L1 9.5Z" fill="#7a7a7a"/></svg>
<div class="r" style="left:96px;top:952px;width:1715px;height:1.2px;background:#9a9a9a"></div>
<svg class="r" style="left:0px;top:0px" width="6" height="6" viewBox="0 0 6 6"><path d="M0 0 H6 A6 6 0 0 0 0 6 Z" fill="#d0d0d0"/></svg>
<svg class="r" style="left:1906px;top:0px" width="6" height="6" viewBox="0 0 6 6"><path d="M6 0 V6 A6 6 0 0 0 0 0 Z" fill="#d0d0d0"/></svg>
<svg class="r" style="left:0px;top:1068px" width="6" height="6" viewBox="0 0 6 6"><path d="M0 6 V0 A6 6 0 0 0 6 6 Z" fill="#d0d0d0"/></svg>
<svg class="r" style="left:1906px;top:1068px" width="6" height="6" viewBox="0 0 6 6"><path d="M6 6 H0 A6 6 0 0 0 6 0 Z" fill="#d0d0d0"/></svg>
</body></html>
